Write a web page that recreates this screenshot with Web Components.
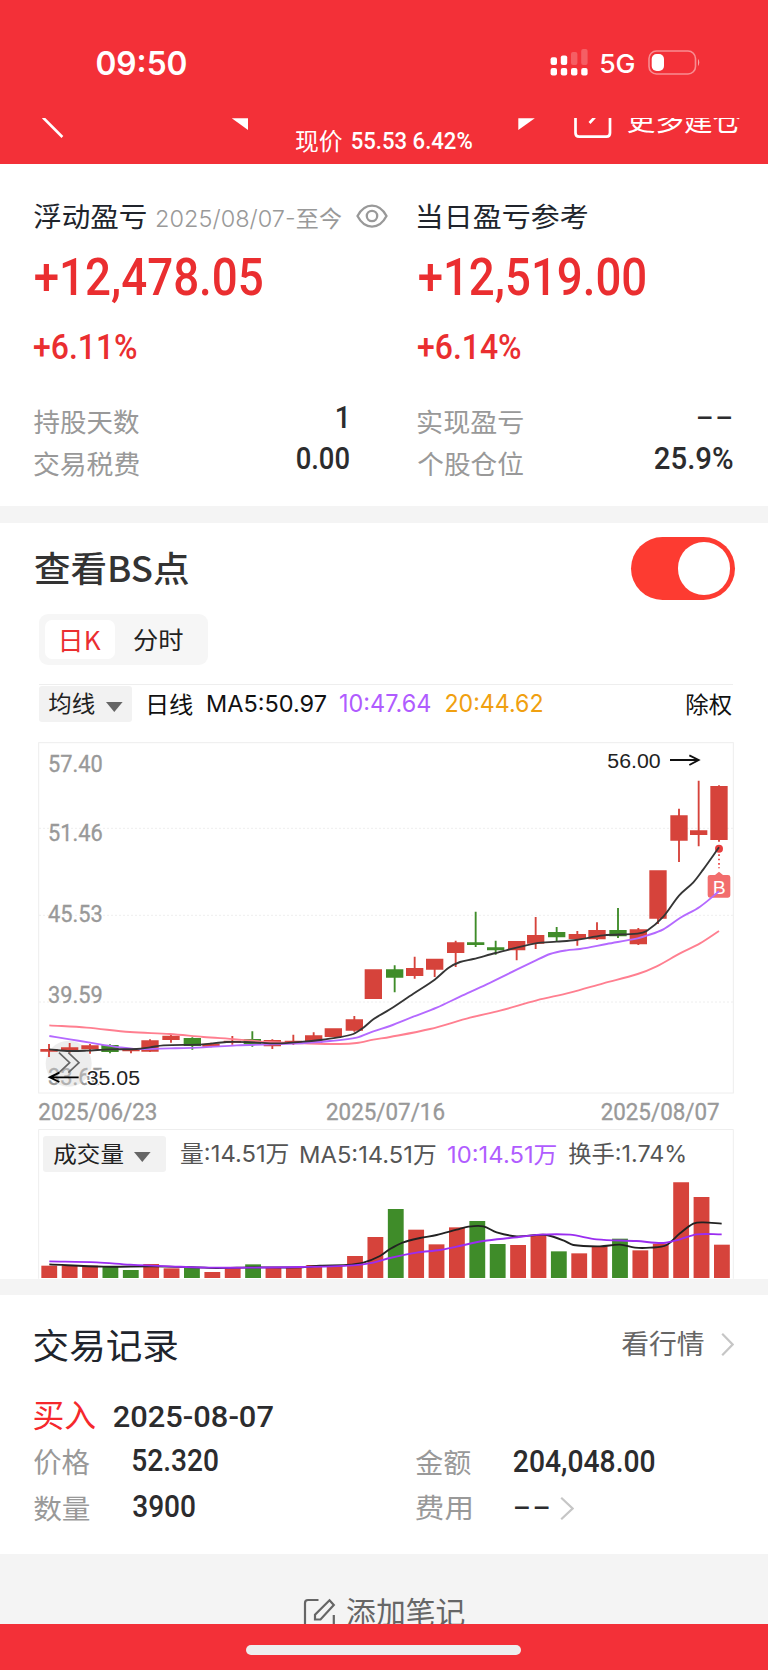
<!DOCTYPE html>
<html lang="zh-CN">
<head>
<meta charset="utf-8">
<title>持仓盈亏</title>
<style>
html,body{margin:0;padding:0}
body{width:768px;height:1670px;overflow:hidden;background:#fff;font-family:"Noto Sans CJK SC",sans-serif;color:#222}
</style>
</head>
<body>
<stock-app></stock-app>
<script>
const define = (name, css, html, init) => {
  const tpl = document.createElement('template');
  customElements.define(name, class extends HTMLElement {
    connectedCallback() {
      if (this.shadowRoot) return;
      tpl.innerHTML = `<style>:host{display:block}*{box-sizing:border-box}${css}</style>` + (typeof html === 'function' ? html(this) : html);
      this.attachShadow({mode: 'open'}).append(tpl.content.cloneNode(true));
      if (init) init(this);
    }
  });
};

/* Text whose glyph box is exactly w by h; l and t are the gaps before and above it. */
const ctx = document.createElement('canvas').getContext('2d');
define('fit-text', `
  :host{flex:none;white-space:pre;font-weight:400}
  :host([f=din]){font-family:Roboto,"Noto Sans CJK SC",sans-serif;font-weight:500}
  :host([f=ui]){font-family:Inter,"Noto Sans CJK SC",sans-serif}
  :host([f=cjk]){font-family:"Noto Sans CJK SC",sans-serif}
  :host([b]){font-weight:600}
  :host([r]){font-weight:400}
  span{display:block;width:max-content;transform-origin:0 0}
`, '<span><slot></slot></span>', el => {
  const cs = getComputedStyle(el), a = n => parseFloat(el.getAttribute(n) || 0);
  const w = a('w'), h = a('h');
  ctx.font = `${cs.fontWeight} 100px ${cs.fontFamily}`;
  const m = ctx.measureText(el.textContent);
  const fs = a('s') || h / (m.actualBoundingBoxAscent + m.actualBoundingBoxDescent) * 100, k = fs / 100;
  const sx = w / ((m.actualBoundingBoxLeft + m.actualBoundingBoxRight) * k);
  const A = Math.round(m.fontBoundingBoxAscent * k), D = Math.round(m.fontBoundingBoxDescent * k);
  const ty = m.actualBoundingBoxAscent * k - A;
  el.style.cssText += `;width:${w}px;height:${h}px;margin-left:${a('l')}px;margin-top:${a('t')}px`;
  const s = el.shadowRoot.querySelector('span');
  s.style.cssText = `font-size:${fs}px;line-height:${A + D}px;transform:translate(${m.actualBoundingBoxLeft * k * sx}px,${ty}px) scaleX(${sx})`;
});
const T = (text, w, h, l, t, extra = '') => `<fit-text w="${w}" h="${h}" l="${l}" t="${t}" ${extra}>${text}</fit-text>`;

define('status-bar', `
  :host{height:118px;color:#fff}
  div{display:flex;align-items:flex-start}
  svg{flex:none;display:block}
`, `<div>
  ${T('09:50', 89, 24.5, 97, 50.5, 'f="ui" b')}
  <svg width="40" height="28" style="margin:49px 0 0 364px" fill="#fff">
    <g opacity=".22"><rect x="21" y="3" width="6.4" height="13" rx="2"/><rect x="31.2" width="6.4" height="16" rx="2"/></g>
    <rect x=".6" y="8.3" width="6.4" height="7.7" rx="2"/><rect x="10.8" y="6.6" width="6.4" height="9.4" rx="2"/>
    <rect x=".6" y="19" width="6.4" height="7.6" rx="2"/><rect x="10.8" y="19" width="6.4" height="7.6" rx="2"/><rect x="21" y="19" width="6.4" height="7.6" rx="2"/><rect x="31.2" y="19" width="6.4" height="7.6" rx="2"/>
  </svg>
  ${T('5G', 33, 19.5, 11, 53.7, 'f="ui" style="font-weight:500"')}
  <svg width="56" height="28" style="margin:49px 0 0 13px">
    <rect x="2" y="2" width="46.5" height="23" rx="7.5" fill="none" stroke="#fff" stroke-opacity=".45" stroke-width="1.6"/>
    <rect x="4.7" y="5" width="12.3" height="17" rx="5" fill="#fff"/>
    <path d="M51 9.8q2.6 3.7 0 7.4z" fill="#fff" fill-opacity=".55"/>
  </svg>
</div>`);

define('nav-bar', `
  :host{height:45.5px;overflow:hidden;color:#fff}
  div{display:flex;align-items:flex-start}
  svg{flex:none;display:block}
`, `<div>
  <svg width="24" height="24" style="margin-left:41.5px"><path d="M1 -.5L20.4 19" stroke="#fff" stroke-width="2.6"/></svg>
  <svg width="18" height="14" style="margin-left:165.5px"><path d="M.8 .3H17V12z" fill="#fff"/></svg>
  ${T('现价', 46, 22.5, 47, 11.5, 'f="cjk"')}
  ${T('55.53 6.42%', 120, 17.6, 9.6, 14, 'f="din"')}
  <svg width="18" height="14" style="margin-left:46.4px"><path d="M.3 .3H16.8L.3 12z" fill="#fff"/></svg>
  <svg width="42" height="24" style="margin-left:36px"><path d="M3.5 0V15Q3.5 18.7 7.2 18.7H34.3Q38 18.7 38 15V0M17.5 5L23 -1" fill="none" stroke="#fff" stroke-width="2.7"/></svg>
  ${T('更多建仓', 112.5, 26.3, 14, -11, 'f="cjk"')}
</div>`);

define('metric-panel', `
  .r{display:flex;align-items:flex-start;padding-left:34.3px}
  .red{color:#ea2e30}.g{color:#999}.d{color:#2c2c2e}.t{color:#20242c}
`, el => {
  const left = el.getAttribute('kind') === 'float';
  return left ? `
  <div class="r t" style="height:86px">${T('浮动盈亏', 112, 25.7, 0, 40, 'f="cjk"')}
    ${T('2025/08/07-', 137, 20.5, 10.5, 45, 'f="ui" style="color:#999;font-weight:350"')}${T('至今', 44.3, 21.5, 3, 44, 'f="cjk" style="color:#999"')}
    <svg width="34" height="28" viewBox="0 0 34 28" style="margin:38px 0 0 13.5px;flex:none" fill="none" stroke="#999" stroke-width="2.3"><path d="M2.5 14Q8 3.6 17 3.6T31.5 14Q26 24.6 17 24.6T2.5 14z"/><circle cx="17" cy="14" r="5.2"/></svg>
  </div>
  <div class="r red" style="height:74px">${T('+12,478.05', 227, 46.8, .5, 8.2, 'f="din"')}</div>
  <div class="r red" style="height:75px">${T('+6.11%', 102.5, 26.3, 0, 9.2, 'f="din"')}</div>
  <div class="r" style="height:42px"><span class="g">${T('持股天数', 105, 25, 0, 10, 'f="cjk"')}</span><span class="d">${T('1', 8.5, 22.4, 198, 8.2, 'f="din"')}</span></div>
  <div class="r" style="height:60px"><span class="g">${T('交易税费', 105, 25, 0, 10, 'f="cjk"')}</span><span class="d">${T('0.00', 51.7, 22.8, 157.5, 7.8, 'f="din"')}</span></div>` : `
  <div class="r t" style="height:86px">${T('当日盈亏参考', 169, 26, 0, 39.6, 'f="cjk"')}</div>
  <div class="r red" style="height:74px">${T('+12,519.00', 226, 46.8, .5, 8.2, 'f="din"')}</div>
  <div class="r red" style="height:75px">${T('+6.14%', 102.5, 26.3, 0, 9.2, 'f="din"')}</div>
  <div class="r" style="height:42px"><span class="g">${T('实现盈亏', 105, 25, -.5, 10, 'f="cjk"')}</span><span class="d">${T('--', 33, 3.2, 175.4, 17.8, 'f="ui" s="30"')}</span></div>
  <div class="r" style="height:60px"><span class="g">${T('个股仓位', 105, 25, -.5, 10, 'f="cjk"')}</span><span class="d">${T('25.9%', 77.5, 22.8, 132, 7.8, 'f="din"')}</span></div>`;
});

define('toggle-switch', `
  :host{width:104.5px;height:62.4px;border-radius:32px;background:#fd3b31;padding:4.7px 4.8px;box-sizing:border-box;display:flex;justify-content:flex-end}
  i{width:52.7px;height:52.7px;border-radius:50%;background:#fff}
`, '<i></i>');

define('tab-switch', `
  :host{width:169.5px;height:51px;border-radius:9px;background:#f6f6f6;box-sizing:border-box;padding:6px;display:flex;color:#222}
  b{display:flex;align-items:flex-start;width:70.5px;height:39px;border-radius:7px;background:#fff;color:#ea2e30;font-weight:400}
  span{display:flex;align-items:flex-start}
`, `<b>${T('日K', 38.7, 21.7, 17.5, 10, 'f="cjk"')}</b><span>${T('分时', 48.7, 22.4, 19, 8.7, 'f="cjk"')}</span>`);

define('drop-button', `
  :host{display:flex;align-items:flex-start;flex:none;height:36px;border-radius:3px;background:#f2f2f2;color:#222}
  svg{display:block}
`, '<slot></slot><svg width="17" height="10.5" style="margin:16.2px 0 0 11.5px"><path d="M0 0H16.6L8.3 10z" fill="#666"/></svg>');

const ns = (x, w, y, s, color, extra = '') => `x="${x}" y="${y}" textLength="${w}" lengthAdjust="spacingAndGlyphs" font-size="${s}" fill="${color}" ${extra}`;
const RED = '#d6433b', GREEN = '#3f8c29';
/* Catmull-Rom smoothing through a flat list of x,y pairs */
const curve = (pts, color, sw = 5.6) => {
  const p = pts.trim().split(/\s+/).map(q => q.split(',').map(Number));
  let d = `M${p[0]}`;
  for (let i = 0; i < p.length - 1; i++) {
    const a = p[i - 1] || p[i], b = p[i], c = p[i + 1], e = p[i + 2] || c, q = (c[0] - b[0]) / 3;
    const s1 = (c[1] - a[1]) / ((c[0] - a[0]) || 1), s2 = (e[1] - b[1]) / ((e[0] - b[0]) || 1);
    d += `C${b[0] + q},${b[1] + s1 * q} ${c[0] - q},${c[1] - s2 * q} ${c}`;
  }
  return `<path d="${d}" fill="none" stroke="${color}" stroke-width="${sw}"/>`;
};

/* centre, body top, body bottom, wick top, wick bottom, falling */
const candles = [[87,957,965,942,981],[149,952,962,939,968],[210,946,958,942,971],[270,945,966,943,970,1],[333,958,964,955,970],[390,931,965,928,966],[453,917,930,913,938],[517,924,948,922,959,1],[573,941,950,938,952],[637,932,938,918,944],[697,927,943,904,950,1],[757,930,949,928,957],[820,932,940,914,945],[881,916,938,907,940],[940,895,921,895,921],[1003,868,902,858,905],[1060,718,807,718,807],[1124,718,743,706,787,1],[1184,714,738,680,746],[1244,686,719,686,741],[1307,637,669,632,711],[1367,637,645,545,651,1],[1427,652,661,632,674,1],[1490,633,661,633,691],[1547,615,641,561,657],[1610,606,622,591,634,1],[1672,612,627,603,647],[1731,600,628,577,630],[1794,600,619,534,624,1],[1855,598,643,594,645],[1914,421,566,421,582],[1977,256,332,236,396],[2036,301,315,152,349],[2097,168,330,166,335]];

define('k-chart', `
  :host{height:399px}
  svg{display:block;font-family:Roboto,sans-serif}
  .a{font-family:"Liberation Sans",sans-serif}
`, `<svg width="768" height="399" viewBox="-60 0 2304 1197">
  <rect x="56" y="38" width="2084" height="1051" fill="none" stroke="#eee" stroke-width="3"/>
  <path d="M57 295H2139M57 556H2139M57 816H2139" stroke="#eee" stroke-width="3" stroke-dasharray="6 6"/>
  ${[['57.40',125],['51.46',333],['45.53',575],['39.59',819],['33.65',1064]].map(([t,y]) => `<text ${ns(84,164,y,71,'#999','stroke="#999" stroke-width="1"')}>${t}</text>`).join('')}
  ${[['2025/06/23',55],['2025/07/16',918],['2025/08/07',1742]].map(([t,x]) => `<text ${ns(x,357,1170,71,'#999','stroke="#999" stroke-width="1"')}>${t}</text>`).join('')}
  <circle cx="146" cy="1001" r="69" fill="#d2d2d2" fill-opacity=".4"/>
  ${candles.map(([x,a,b,c,d,g]) => `<path d="M${x-26} ${a}h52V${b}h-52zM${x-2.8} ${c}h5.6V${d}h-5.6z" fill="${g ? GREEN : RED}"/>`).join('')}
  <circle cx="2097" cy="356" r="12" fill="#e83e3e"/>
  <path d="M2097 373V415" stroke="#ee5a5a" stroke-width="6" stroke-dasharray="5 8"/>
  <path d="M2070 435H2085L2097 425L2109 435H2124Q2131 435 2131 442V496Q2131 503 2124 503H2070Q2063 503 2063 496V442Q2063 435 2070 435z" fill="#f26d6d"/>
  <text class="a" ${ns(2078,39,491,56,'#fff')}>B</text>
  ${curve('88,886 200,893 330,906 450,912 550,921 650,928 740,936 850,940 960,942 1010,939 1060,929 1110,921 1230,897 1350,863 1440,842 1550,811 1650,788 1750,760 1853,732 1910,709 1980,670 2040,640 2097,603','#ff7f90')}
  ${curve('88,918 150,928 210,938 300,952 350,957 450,955 550,952 650,946 820,941 930,933 1010,923 1060,904 1110,888 1180,860 1250,833 1320,800 1400,763 1490,719 1540,695 1590,672 1640,661 1680,657 1760,642 1853,625 1880,617 1930,598 1980,564 2040,530 2097,484','#b469ff')}
  ${curve('87,958 150,963 200,962 270,958 350,957 390,952 430,946 550,943 620,936 700,937 770,940 850,935 900,930 950,923 1000,912 1030,893 1060,868 1110,838 1180,791 1244,749 1285,714 1320,696 1360,687 1427,669 1547,640 1610,635 1668,630 1750,616 1853,611 1880,603 1930,560 1977,497 2020,457 2050,418 2097,352','#353535')}
  <path d="M117 968L149 998L117 1028M145 968L177 998L145 1028" fill="none" stroke="#666" stroke-width="5"/>
  <path d="M176 1042H89M118 1028L89 1042L118 1056" fill="none" stroke="#000" stroke-width="5.5"/>
  <text class="a" ${ns(200,160,1066,61,'#222','stroke="#fff" stroke-width="8" paint-order="stroke"')}>35.05</text>
  <text class="a" ${ns(1762,160,114,61,'#222')}>56.00</text>
  <path d="M1950 90H2036M2008 76L2036 90L2008 105" fill="none" stroke="#111" stroke-width="5.5"/>
</svg>`);

const vols = [[437],[436],[437],[441,1],[450,1],[432],[445],[442,1],[456],[444],[433,1],[442],[443],[435],[437],[408],[351],[267,1],[329],[373],[322],[303,1],[372,1],[375],[345],[394,1],[400],[379],[356,1],[391],[371],[187],[231],[374]];
define('volume-chart', `
  :host{height:149.7px;display:grid}
  :host>*{grid-area:1/1}
  svg.v{display:block}
  div{display:flex;align-items:flex-start;padding-left:43px;color:#555}
`, `<svg class="v" width="768" height="149.7" viewBox="-60 27 2304 449">
  <path d="M56 476V28.5H2140V476" fill="none" stroke="#eee" stroke-width="3"/>
  ${vols.map(([y,g],i) => `<path d="M${64+i*61.15} ${y}h47.5V474h-47.5z" fill="${g ? GREEN : RED}"/>`).join('')}
  ${curve('88,433 250,440 400,439 530,442 590,444 700,442 840,442 900,437 980,435 1030,428 1080,408 1110,387 1150,367 1200,354 1250,345 1310,329 1345,320 1390,319 1430,337 1490,349 1550,345 1580,345 1630,361 1660,375 1740,379 1800,374 1845,383 1890,383 1940,375 1980,340 2020,311 2050,307 2105,311','#222')}
  ${curve('88,424 230,427 330,434 450,439 590,443 840,441 1000,436 1060,428 1110,414 1190,398 1260,390 1310,380 1390,363 1480,353 1560,344 1650,344 1730,358 1850,363 1930,369 1980,358 2030,343 2105,343','#9a2df0')}
</svg>
<div><drop-button style="width:123px;margin-top:6.2px">${T('成交量', 69, 21.2, 10.7, 7.6, 'f="cjk"')}</drop-button>
  ${T('量:14.51万', 107, 20.8, 15.3, 14, 'f="ui"')}
  ${T('MA5:14.51万', 134.3, 19.6, 12.4, 15.2, 'f="ui"')}
  ${T('10:14.51万', 108, 19.6, 13, 15.2, 'f="ui" style="color:#b05cff"')}
  ${T('换手:1.74%', 115.6, 21, 12.7, 13.7, 'f="ui"')}</div>`);

define('chart-section', `
  .h{display:flex;align-items:flex-start;height:91px;color:#333}
  .m{display:flex;align-items:flex-start;height:46px;margin:19.5px 35px 0 38.7px;border-top:1px solid #eee;color:#111}
`, `<div class="h">${T('查看BS点', 153, 33.7, 35, 29, 'f="cjk" style="font-weight:500"')}<toggle-switch style="margin:14.5px 0 0 442.5px"></toggle-switch></div>
<tab-switch style="margin-left:38.7px"></tab-switch>
<div class="m"><drop-button style="width:93px;margin-top:.5px">${T('均线', 45.5, 21.3, 10.3, 7.5, 'f="cjk"')}</drop-button>
  ${T('日线', 43.6, 20.8, 17.2, 8.3, 'f="cjk"')}
  ${T('MA5:50.97', 118, 17.7, 15.1, 9.5, 'f="ui"')}
  ${T('10:47.64', 90, 17.7, 14.8, 9.5, 'f="ui" style="color:#b05cff"')}
  ${T('20:44.62', 96, 17.7, 15.5, 9.5, 'f="ui" style="color:#f0a010"')}
  ${T('除权', 44.4, 21.7, 145.1, 7.7, 'f="cjk"')}</div>
<k-chart></k-chart><volume-chart></volume-chart>`);

const chev = (w, h, style) => `<svg width="${w}" height="${h}" style="${style};flex:none"><path d="M1.2 .8L${w - 1.4} ${h / 2}L1.2 ${h - .8}" fill="none" stroke="#c6c6c6" stroke-width="2.2"/></svg>`;
const F = (label, value) => `<span class="c"><span class="g">${label}</span><span class="d">${value}</span></span>`;
define('trade-record', `
  :host{height:259.3px}
  .r{display:flex;align-items:flex-start;padding-left:34.3px}
  .g{color:#999}.d{color:#2c2c2e}
  .c{display:flex;align-items:flex-start;flex:0 0 382px}
`, `<div class="r" style="height:95.3px">${T('交易记录', 143.5, 33.7, 0, 33.3, 'f="cjk" style="color:#20242c"')}${T('看行情', 81.6, 26, 444.6, 35.3, 'f="cjk" style="color:#666"')}${chev(13, 23, 'margin:38px 0 0 17.5px')}</div>
<div class="r" style="height:50px">${T('买入', 61.2, 29, 0, 10.3, 'f="cjk" style="color:#f5282c"')}${T('2025-08-07', 158.8, 22, 18.5, 15, 'f="din" style="color:#2c2c2e"')}</div>
<div class="r" style="height:46px">${F(T('价格', 55.4, 26.3, 0, 9, 'f="cjk"'), T('52.320', 84.7, 22.8, 43, 10, 'f="din"'))}${F(T('金额', 54.7, 26.3, 0, 9, 'f="cjk"'), T('204,048.00', 140.3, 27.5, 43, 10, 'f="din"'))}</div>
<div class="r">${F(T('数量', 55.4, 26, 0, 9, 'f="cjk"'), T('3900', 61.7, 22.8, 43, 10, 'f="din"'))}${F(T('费用', 54.7, 26, 0, 9, 'f="cjk"'), T('--', 33.5, 3.2, 44, 19.7, 'f="ui" s="30"'))}</div>`, el => {
  el.shadowRoot.querySelectorAll('.c')[3].insertAdjacentHTML('beforeend', chev(14, 23, 'margin:10.2px 0 0 11.5px'));
});

define('note-bar', `
  :host{height:70px;overflow:hidden;background:#f4f4f4;color:#666}
  div{display:flex;align-items:flex-start}
`, `<div><svg width="34" height="34" viewBox="0 0 34 34" style="margin:43px 0 0 302px;flex:none" fill="none" stroke="#666" stroke-width="2.2"><path d="M16.5 3H6Q3 3 3 6V28Q3 31 6 31H28Q31.8 31 31.8 28V18"/><path d="M27.5 3.3L31.8 8L18.5 22.5H13V17.8z"/></svg>
${T('添加笔记', 117.6, 28, 10.7, 44, 'f="cjk"')}</div>`);

define('home-bar', `
  :host{height:45.5px;background:#f33038;padding-top:20.3px;box-sizing:border-box}
  i{display:block;width:275.2px;height:10.3px;border-radius:5px;background:#eee;margin-left:246.3px}
`, '<i></i>');

define('stock-app', `
  :host{width:768px;height:1670px;overflow:hidden;background:#fff}
  header{background:#f33038}
  .two{display:grid;grid-template-columns:384px 384px;height:342.8px}
  .gap{background:#f4f4f4}
`, `<header><status-bar></status-bar><nav-bar></nav-bar></header>
<div class="two"><metric-panel kind="float"></metric-panel><metric-panel kind="day"></metric-panel></div>
<div class="gap" style="height:16.7px"></div>
<chart-section></chart-section>
<div class="gap" style="height:16px"></div>
<trade-record></trade-record>
<note-bar></note-bar>
<home-bar></home-bar>`);
</script>
</body>
</html>
